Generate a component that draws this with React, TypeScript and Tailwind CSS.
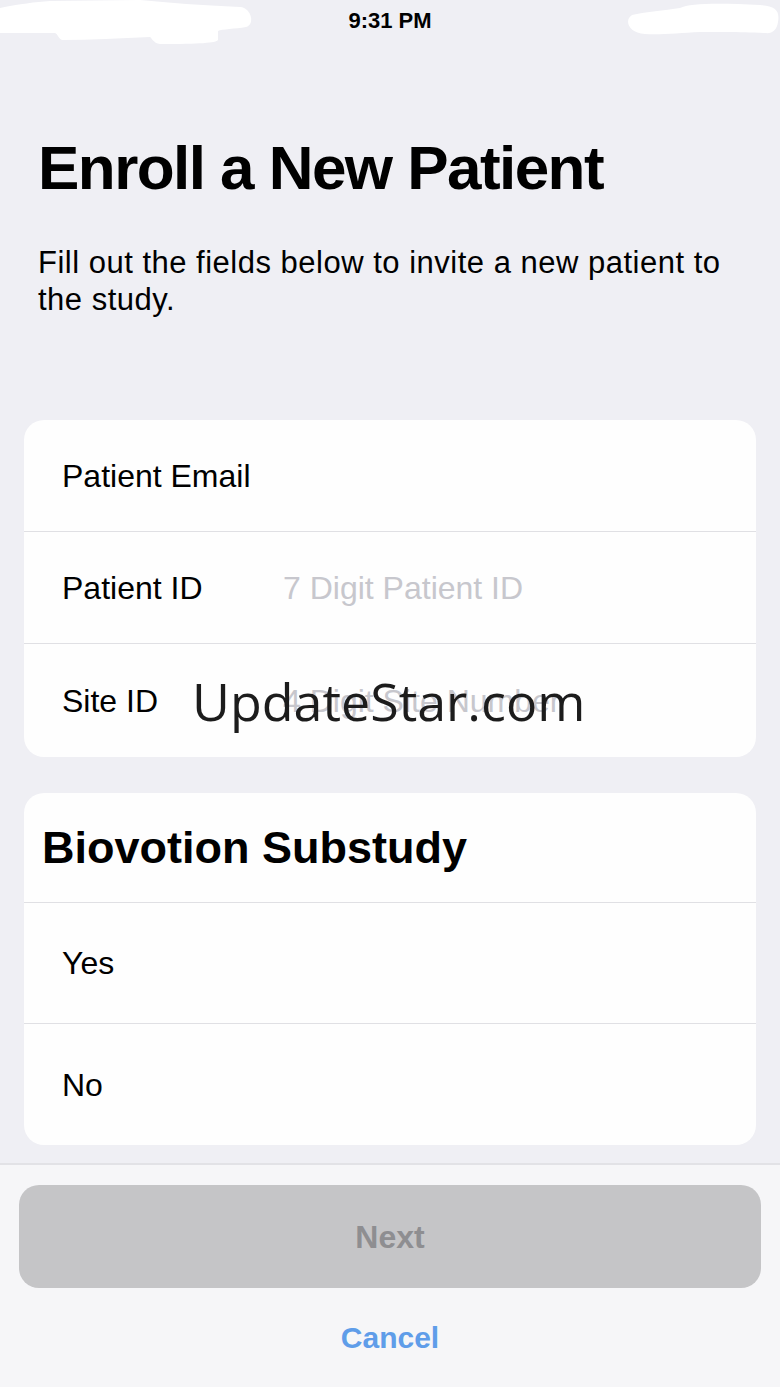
const font = { fontFamily: '"Liberation Sans", Arial, sans-serif' };

function Redactions() {
  return (
    <svg className="absolute left-0 top-0" width="780" height="50" viewBox="0 0 780 50">
      <path
        d="M0 8 C20 4 35 2 50 1 L140 0 C170 3 200 5 240 7 C252 8 255 25 246 27 C235 29 222 29 218 31 L218 40 C216 43 200 44 160 44 C153 43 152 38 150 37 C120 38 90 40 62 40 C58 38 58 34 55 33 L0 33 Z"
        fill="#ffffff"
      />
      <path
        d="M632 15 C645 12 660 11 680 8 C690 3 720 3 760 5 C775 6 780 10 778 22 C777 30 772 34 765 33 C740 32 710 32 700 32 C680 33 660 35 645 34 C628 33 624 20 632 15 Z"
        fill="#ffffff"
      />
    </svg>
  );
}

function Row({ label, placeholder, h, last }: { label: string; placeholder?: string; h: string; last?: boolean }) {
  return (
    <div className={`flex items-center pl-[38px] ${h} ${last ? '' : 'border-b border-[#e0e0e4]'}`}>
      <span className="w-[221px] shrink-0 text-[32px] text-black">{label}</span>
      {placeholder && <span className="text-[32px] text-[#c7c7cd]">{placeholder}</span>}
    </div>
  );
}

export default function App() {
  return (
    <div className="w-[780px] h-[1387px] bg-[#efeff4] flex flex-col overflow-hidden" style={font}>
      <div className="relative h-10 flex items-center justify-center">
        <Redactions />
        <span className="relative text-[22px] font-semibold text-black">9:31 PM</span>
      </div>

      <div className="px-[24px] flex flex-col">
        <h1 className="mt-[97px] px-[14px] text-[62px] leading-[62px] font-bold tracking-tight text-black">
          Enroll a New Patient
        </h1>
        <p className="mt-[45px] px-[14px] text-[31px] leading-[37px] tracking-[0.5px] text-black">
          Fill out the fields below to invite a new patient to the study.
        </p>

        <div className="mt-[102px] bg-[#fefefe] rounded-[20px] flex flex-col">
          <Row label="Patient Email" h="h-[112px]" />
          <Row label="Patient ID" placeholder="7 Digit Patient ID" h="h-[112px]" />
          <div className="relative">
            <Row label="Site ID" placeholder="4 Digit Site Number" h="h-[113px]" last />
            <div className="absolute inset-y-0 left-[168px] flex items-center">
              <span
                className="text-[52px] leading-none text-[#1c1c1c]"
                style={{ fontFamily: '"Open Sans", "Noto Sans", sans-serif' }}
              >
                UpdateStar.com
              </span>
            </div>
          </div>
        </div>

        <div className="mt-[36px] bg-[#fefefe] rounded-[20px] flex flex-col">
          <div className="h-[110px] flex items-center pl-[18px] border-b border-[#e0e0e4]">
            <span className="text-[45px] font-bold text-black">Biovotion Substudy</span>
          </div>
          <Row label="Yes" h="h-[121px]" />
          <Row label="No" h="h-[121px]" last />
        </div>
      </div>

      <div className="mt-[18px] flex-1 border-t-2 border-[#e2e2e6] bg-[#f6f6f8] flex flex-col">
        <div className="pt-[20px] px-[19px]">
          <div className="h-[103px] rounded-[20px] bg-[#c5c5c7] flex items-center justify-center">
            <span className="text-[32px] font-semibold text-[#8e8e91]">Next</span>
          </div>
        </div>
        <div className="h-[99px] flex items-center justify-center">
          <span className="text-[30px] font-semibold text-[#5f9de9]">Cancel</span>
        </div>
      </div>
    </div>
  );
}
